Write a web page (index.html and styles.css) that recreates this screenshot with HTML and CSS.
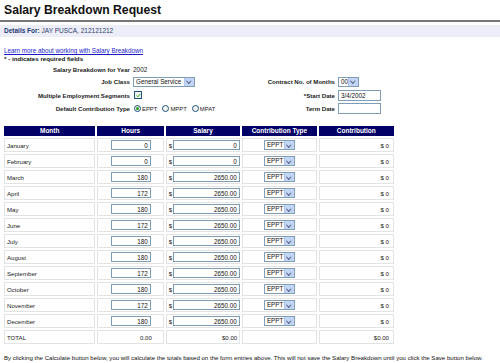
FILE: index.html
```html
<!DOCTYPE html>
<html>
<head>
    <title>Salary Breakdown Request</title>
    <meta name="viewport" content="width=device-width, initial-scale=1.0">
    <link rel="stylesheet" href="styles.css">
</head>
<body>
    <h1 class="page-title">Salary Breakdown Request</h1>
    <div class="details-bar"><b>Details For:</b> JAY PUSCA, 212121212</div>

    <a class="help-link" href="#">Learn more about working with Salary Breakdown</a>
    <div class="required-note">* - indicates required fields</div>

    <div class="form-grid">
        <div class="label">Salary Breakdown for Year</div>
        <div class="value">2002</div>
        <div></div>
        <div></div>

        <div class="label">Job Class</div>
        <div class="value"><span class="select job-select"><span class="select-text">General Service</span><span class="select-btn"></span></span></div>
        <div class="label">Contract No. of Months</div>
        <div class="value"><span class="select months-select"><span class="select-text">00</span><span class="select-btn"></span></span></div>

        <div class="label">Multiple Employment Segments</div>
        <div class="value"><span class="checkbox"><svg viewBox="0 0 8 8" width="5" height="5"><path d="M1 4 L3 6 L7 1.5" fill="none" stroke="#21a121" stroke-width="1.6"/></svg></span></div>
        <div class="label">*Start Date</div>
        <div class="value"><input class="text-input" type="text" value="3/4/2002"></div>

        <div class="label">Default Contribution Type</div>
        <div class="value radios">
            <span class="radio checked"></span><span class="radio-label">EPPT</span>
            <span class="radio"></span><span class="radio-label">MPPT</span>
            <span class="radio"></span><span class="radio-label">MPAT</span>
        </div>
        <div class="label">Term Date</div>
        <div class="value"><input class="text-input" type="text" value=""></div>
    </div>

    <table class="breakdown">
        <colgroup>
            <col class="c-month"><col class="c-hours"><col class="c-salary"><col class="c-type"><col class="c-contrib">
        </colgroup>
        <thead>
            <tr><th>Month</th><th>Hours</th><th>Salary</th><th>Contribution Type</th><th>Contribution</th></tr>
        </thead>
        <tbody id="rows"></tbody>
        <tfoot>
            <tr class="total-row"><td>TOTAL</td><td class="num">0.00</td><td class="num">$0.00</td><td></td><td class="num">$0.00</td></tr>
        </tfoot>
    </table>

    <p class="footer-note">By clicking the Calculate button below, you will calculate the totals based on the form entries above. This will not save the Salary Breakdown until you click the Save button below.</p>

    <script>
        const months = ['January','February','March','April','May','June','July','August','September','October','November','December'];
        const hours = [0, 0, 180, 172, 180, 172, 180, 180, 172, 180, 172, 180];
        const tbody = document.getElementById('rows');

        months.forEach(function(m, i) {
            const salary = hours[i] === 0 ? '0' : '2650.00';
            const tr = document.createElement('tr');
            tr.innerHTML =
                `<td>${m}</td>` +
                `<td class="center"><input class="hours-input" type="text" value="${hours[i]}"></td>` +
                `<td><span class="dollar">$</span><input class="salary-input" type="text" value="${salary}"></td>` +
                `<td class="center"><span class="select type-select"><span class="select-text">EPPT</span><span class="select-btn"></span></span></td>` +
                `<td class="num">$ 0</td>`;
            tbody.appendChild(tr);
        });
    </script>
</body>
</html>
```

FILE: styles.css
```css
html, body {
    margin: 0;
    background-color: #ffffff;
}
body {
    padding: 0 4px;
    font-family: "Liberation Sans", Arial, sans-serif;
    font-size: 6.5px;
    color: #222;
}
.page-title {
    margin: 0 -4px;
    padding: 3px 4px 3px;
    font-size: 12.2px;
    line-height: 14px;
    font-weight: bold;
    color: #111;
    border-bottom: 2px solid #777;
}
.details-bar {
    margin: 3px -4px 0;
    padding: 0 4px;
    height: 12px;
    line-height: 12px;
    background-color: #ededf7;
    color: #2b3f73;
    font-size: 6.5px;
}
.details-bar b {
    color: #1d3a78;
}
.help-link {
    display: block;
    margin-top: 10px;
    line-height: 8px;
    color: #1a1acc;
    font-size: 6.3px;
}
.required-note {
    line-height: 8px;
    font-weight: bold;
    font-size: 6.2px;
    color: #111;
}
.form-grid {
    display: grid;
    grid-template-columns: 126px 121px 78px 1fr;
    grid-template-rows: 11px 13px 14px 13px;
    column-gap: 3px;
    align-items: center;
    margin-top: 1px;
}
.label {
    text-align: right;
    font-weight: bold;
    font-size: 6.1px;
    color: #222;
    white-space: nowrap;
}
.value {
    display: flex;
    align-items: center;
    font-size: 6.5px;
}
.select {
    display: inline-flex;
    align-items: stretch;
    height: 10px;
    box-sizing: border-box;
    border: 1px solid #7f9db9;
    background-color: #fff;
    font-size: 6.3px;
}
.select-text {
    flex: 1;
    padding-left: 2px;
    line-height: 8px;
    color: #111;
}
.select-btn {
    width: 9px;
    background-color: #c3d4f7;
    border-left: 1px solid #b0c4ee;
    position: relative;
}
.select-btn::after {
    content: "";
    position: absolute;
    left: 2px;
    top: 1.5px;
    width: 2.5px;
    height: 2.5px;
    border-right: 1.2px solid #4d6185;
    border-bottom: 1.2px solid #4d6185;
    transform: rotate(45deg);
}
.job-select {
    width: 62px;
}
.months-select {
    width: 21px;
}
.type-select {
    width: 31px;
    text-align: left;
}
.checkbox {
    display: inline-flex;
    align-items: center;
    justify-content: center;
    width: 6px;
    height: 6px;
    margin-left: 1px;
    border: 1px solid #1c5180;
    background-color: #f4f4ee;
}
.radios {
    gap: 1px;
}
.radio {
    display: inline-block;
    width: 5px;
    height: 5px;
    border: 1px solid #1c5180;
    border-radius: 50%;
    background-color: #f4f4ee;
    position: relative;
    margin-left: 1px;
}
.radio.checked::after {
    content: "";
    position: absolute;
    left: 1px;
    top: 1px;
    width: 3px;
    height: 3px;
    border-radius: 50%;
    background-color: #21a121;
}
.radio-label {
    margin-right: 3px;
    font-size: 5.9px;
}
.text-input {
    width: 43px;
    height: 11px;
    box-sizing: border-box;
    border: 1px solid #7f9db9;
    padding: 0 2px;
    font-family: "Liberation Sans", Arial, sans-serif;
    font-size: 6.3px;
    color: #111;
    outline: none;
}
.breakdown {
    margin: 9px 0 0 -2px;
    border-collapse: separate;
    border-spacing: 2px;
    table-layout: fixed;
    width: 394px;
}
.c-month { width: 91px; }
.c-hours { width: 66px; }
.c-salary { width: 74px; }
.c-type { width: 74px; }
.c-contrib { width: 75px; }
.breakdown th {
    height: 10px;
    padding: 0;
    background-color: #000066;
    color: #fff;
    font-size: 6.5px;
    font-weight: bold;
    line-height: 10px;
}
.breakdown td {
    height: 14px;
    padding: 0 2px;
    box-sizing: border-box;
    border: 1px solid #e3e3e3;
    font-size: 6.1px;
    color: #222;
    white-space: nowrap;
}
.breakdown td.center {
    text-align: center;
}
.breakdown td.num {
    text-align: right;
    padding-right: 4px;
}
.hours-input, .salary-input {
    height: 10px;
    box-sizing: border-box;
    border: 1px solid #7f9db9;
    padding: 0 2px;
    text-align: right;
    font-family: "Liberation Sans", Arial, sans-serif;
    font-size: 6.3px;
    color: #111;
    outline: none;
    vertical-align: middle;
}
.hours-input {
    width: 40px;
}
.salary-input {
    width: 67px;
}
.dollar {
    display: inline-block;
    width: 4px;
    vertical-align: middle;
}
.total-row td.num:nth-child(2) {
    padding-right: 11px;
}
.total-row td.num:nth-child(3) {
    padding-right: 2px;
}
.footer-note {
    margin: 8px 0 0;
    font-size: 6.1px;
    line-height: 8px;
    color: #111;
    white-space: nowrap;
}
```
